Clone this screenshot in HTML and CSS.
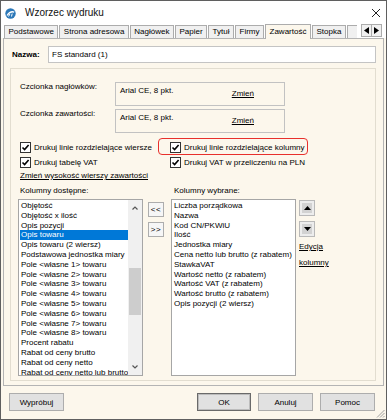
FILE: index.html
```html
<!DOCTYPE html>
<html lang="pl">
<head>
    <meta charset="UTF-8">
    <title>Wzorzec wydruku</title>
    <link rel="stylesheet" href="styles.css">
</head>
<body>
<div class="window">
    <div class="titlebar">
        <svg class="app-icon" width="11" height="11" viewBox="0 0 11 11">
            <circle cx="5.5" cy="5.5" r="5.2" fill="#2c78b8"/>
            <path d="M2 7.5 Q5.5 2.5 9.2 4.2" stroke="#fff" stroke-width="1.3" fill="none"/>
            <path d="M3.5 8.5 L5 5.8 M6.5 8.5 L7.2 5.6" stroke="#fff" stroke-width="1" fill="none"/>
        </svg>
        <span class="title">Wzorzec wydruku</span>
        <svg class="close" width="10" height="10" viewBox="0 0 10 10">
            <path d="M1 1 L9 9 M9 1 L1 9" stroke="#222" stroke-width="1"/>
        </svg>
    </div>

    <div class="tabbar">
        <div class="tabs">
            <div class="tab">Podstawowe</div>
            <div class="tab">Strona adresowa</div>
            <div class="tab">Nagłówek</div>
            <div class="tab">Papier</div>
            <div class="tab">Tytuł</div>
            <div class="tab">Firmy</div>
            <div class="tab active">Zawartość</div>
            <div class="tab">Stopka</div>
            <div class="tab stub"></div>
        </div>
        <div class="tab-arrows">
            <span class="tab-arrow">
                <svg width="5" height="7" viewBox="0 0 5 7"><path d="M5 0 L0 3.5 L5 7 Z" fill="#000"/></svg>
            </span>
            <span class="tab-arrow">
                <svg width="5" height="7" viewBox="0 0 5 7"><path d="M0 0 L5 3.5 L0 7 Z" fill="#000"/></svg>
            </span>
        </div>
    </div>

    <div class="page">
        <div class="name-row">
            <label class="name-label">Nazwa:</label>
            <input class="name-input" type="text" value="FS standard (1)">
        </div>

        <div class="group">
            <div class="font-row">
                <span class="font-label">Czcionka nagłówków:</span>
                <div class="font-box">
                    <span class="font-value">Arial CE, 8 pkt.</span>
                    <a class="link change">Zmień</a>
                </div>
            </div>
            <div class="font-row">
                <span class="font-label">Czcionka zawartości:</span>
                <div class="font-box">
                    <span class="font-value">Arial CE, 8 pkt.</span>
                    <a class="link change">Zmień</a>
                </div>
            </div>

            <div class="checks">
                <div class="check-item"><span class="box"><svg width="9" height="9" viewBox="0 0 9 9"><path d="M1.5 4.5 L3.6 6.6 L7.6 2" stroke="#000" stroke-width="1.6" fill="none"/></svg></span>Drukuj linie rozdzielające wiersze</div>
                <div class="check-item marked"><span class="box"><svg width="9" height="9" viewBox="0 0 9 9"><path d="M1.5 4.5 L3.6 6.6 L7.6 2" stroke="#000" stroke-width="1.6" fill="none"/></svg></span>Drukuj linie rozdzielające kolumny</div>
                <div class="check-item"><span class="box"><svg width="9" height="9" viewBox="0 0 9 9"><path d="M1.5 4.5 L3.6 6.6 L7.6 2" stroke="#000" stroke-width="1.6" fill="none"/></svg></span>Drukuj tabelę VAT</div>
                <div class="check-item"><span class="box"><svg width="9" height="9" viewBox="0 0 9 9"><path d="M1.5 4.5 L3.6 6.6 L7.6 2" stroke="#000" stroke-width="1.6" fill="none"/></svg></span>Drukuj VAT w przeliczeniu na PLN</div>
            </div>

            <div class="row-link"><a class="link">Zmień wysokość wierszy zawartości</a></div>

            <div class="col-labels">
                <span>Kolumny dostępne:</span>
                <span>Kolumny wybrane:</span>
            </div>

            <div class="lists">
                <div class="listbox available">
                    <ul>
                        <li>Objętość</li>
                        <li>Objętość x ilość</li>
                        <li>Opis pozycji</li>
                        <li class="selected">Opis towaru</li>
                        <li>Opis towaru (2 wiersz)</li>
                        <li>Podstawowa jednostka miary</li>
                        <li>Pole &lt;własne 1&gt; towaru</li>
                        <li>Pole &lt;własne 2&gt; towaru</li>
                        <li>Pole &lt;własne 3&gt; towaru</li>
                        <li>Pole &lt;własne 4&gt; towaru</li>
                        <li>Pole &lt;własne 5&gt; towaru</li>
                        <li>Pole &lt;własne 6&gt; towaru</li>
                        <li>Pole &lt;własne 7&gt; towaru</li>
                        <li>Pole &lt;własne 8&gt; towaru</li>
                        <li>Procent rabatu</li>
                        <li>Rabat od ceny brutto</li>
                        <li>Rabat od ceny netto</li>
                        <li>Rabat od ceny netto lub brutto</li>
                    </ul>
                    <div class="scrollbar">
                        <svg class="chev" width="14" height="16" viewBox="0 0 14 16"><path d="M4.5 9.5 L7 7 L9.5 9.5" stroke="#555" stroke-width="1.2" fill="none"/></svg>
                        <div class="track"><div class="thumb"></div></div>
                        <svg class="chev" width="14" height="16" viewBox="0 0 14 16"><path d="M4.5 6.5 L7 9 L9.5 6.5" stroke="#555" stroke-width="1.2" fill="none"/></svg>
                    </div>
                </div>

                <div class="move-btns">
                    <button class="small-btn">&lt;&lt;</button>
                    <button class="small-btn">&gt;&gt;</button>
                </div>

                <div class="listbox chosen">
                    <ul>
                        <li>Liczba porządkowa</li>
                        <li>Nazwa</li>
                        <li>Kod CN/PKWiU</li>
                        <li>Ilość</li>
                        <li>Jednostka miary</li>
                        <li>Cena netto lub brutto (z rabatem)</li>
                        <li>StawkaVAT</li>
                        <li>Wartość netto (z rabatem)</li>
                        <li>Wartość VAT (z rabatem)</li>
                        <li>Wartość brutto (z rabatem)</li>
                        <li>Opis pozycji (2 wiersz)</li>
                    </ul>
                </div>

                <div class="order">
                    <button class="arrow-btn"><svg width="7" height="4" viewBox="0 0 7 4"><path d="M0 4 L3.5 0 L7 4 Z" fill="#000"/></svg></button>
                    <button class="arrow-btn"><svg width="7" height="4" viewBox="0 0 7 4"><path d="M0 0 L3.5 4 L7 0 Z" fill="#000"/></svg></button>
                    <a class="link order-link">Edycja</a>
                    <a class="link order-link">kolumny</a>
                </div>
            </div>
        </div>
    </div>

    <div class="footer">
        <button class="btn">Wypróbuj</button>
        <button class="btn default push">OK</button>
        <button class="btn">Anuluj</button>
        <button class="btn">Pomoc</button>
    </div>

    <svg class="grip" width="10" height="10" viewBox="0 0 10 10">
        <path d="M9.5 2 L2 9.5 M9.5 5 L5 9.5 M9.5 8 L8 9.5" stroke="#a0a0a0" stroke-width="1"/>
    </svg>
</div>
</body>
</html>
```

FILE: styles.css
```css
body {
    margin: 0;
    font-family: "Liberation Sans", Arial, sans-serif;
    font-size: 8px;
    color: #000;
    background: #fff;
}
.window {
    position: relative;
    width: 387px;
    height: 420px;
    box-sizing: border-box;
    border: 1px solid #5f5f5f;
    background: #fcf7ec;
    display: flex;
    flex-direction: column;
}
.titlebar {
    height: 23px;
    flex: none;
    display: flex;
    align-items: center;
    padding-left: 4px;
    background: #fff;
}
.app-icon {
    margin-top: 1px;
}
.title {
    margin-left: 9px;
    font-size: 10px;
    color: #111;
}
.close {
    margin-left: auto;
    margin-right: 5px;
}

/* zakładki */
.tabbar {
    height: 14px;
    flex: none;
    display: flex;
    align-items: flex-end;
    padding-left: 3px;
    background: #fff;
    position: relative;
    z-index: 1;
}
.tabs {
    display: flex;
    align-items: flex-end;
    width: 353px;
    overflow: hidden;
    height: 15px;
    margin-bottom: -1px;
}
.tab {
    flex: none;
    height: 13px;
    line-height: 12px;
    padding: 0 3.5px;
    margin-right: 1px;
    margin-bottom: 1px;
    box-sizing: border-box;
    border: 1px solid #acacac;
    border-bottom: none;
    background: #f0f0f0;
    white-space: nowrap;
}
.tab.active {
    height: 15px;
    line-height: 13px;
    margin-bottom: 0;
    background: #fcf7ec;
}
.tab.stub {
    width: 30px;
}
.tab-arrows {
    display: flex;
    margin-left: 4px;
    margin-bottom: 1px;
    border: 1px solid #acacac;
    background: #f0f0f0;
}
.tab-arrow {
    width: 9px;
    height: 11px;
    display: flex;
    align-items: center;
    justify-content: center;
}
.tab-arrow + .tab-arrow {
    border-left: 1px solid #acacac;
}

/* strona */
.page {
    height: 348px;
    flex: none;
    box-sizing: border-box;
    margin: 0 2px;
    border: 1px solid #b4b4b4;
    padding: 7px 0 4px 6px;
}
.name-row {
    display: flex;
    align-items: center;
    padding-left: 2px;
}
.name-label {
    width: 36px;
    font-weight: bold;
}
.name-input {
    width: 328px;
    height: 17px;
    box-sizing: border-box;
    border: 1px solid #c4c4c4;
    background: #fff;
    font: inherit;
    padding: 0 3px;
    margin: 0;
    outline: none;
}
.group {
    width: 366px;
    box-sizing: border-box;
    margin-top: 5px;
    border: 1px solid #e2ddd0;
    padding: 13px 0 4px 7px;
}
.font-row {
    display: flex;
    line-height: 10px;
}
.font-row + .font-row {
    margin-top: 3px;
}
.font-label {
    width: 95px;
    margin-left: 2px;
}
.font-box {
    width: 170px;
    height: 24px;
    box-sizing: border-box;
    border: 1px solid #c2c2c2;
    display: flex;
    padding: 3px 0 0 4px;
}
.change {
    margin-left: auto;
    margin-right: 30px;
    align-self: center;
    margin-top: -3px;
}
.link {
    color: #000;
    text-decoration: underline;
}
.checks {
    display: grid;
    grid-template-columns: 150px auto;
    margin-top: 7px;
    margin-left: 2px;
}
.check-item {
    height: 15px;
    display: flex;
    align-items: center;
    white-space: nowrap;
    position: relative;
}
.box {
    width: 9px;
    height: 9px;
    border: 1px solid #333;
    background: #fff;
    margin-right: 3px;
    display: flex;
}
.marked::after {
    content: "";
    position: absolute;
    left: -12px;
    top: -2px;
    width: 150px;
    height: 17px;
    box-sizing: border-box;
    border: 1.5px solid #e8302c;
    border-radius: 4px;
}
.row-link {
    height: 12px;
    line-height: 12px;
    margin-left: 2px;
}
.col-labels {
    display: grid;
    grid-template-columns: 154px auto;
    height: 14px;
    line-height: 14px;
    margin-top: 2px;
    margin-left: 2px;
}

/* listy kolumn */
.lists {
    display: flex;
    align-items: flex-start;
    margin-top: 1px;
}
.listbox {
    width: 125px;
    height: 177px;
    box-sizing: border-box;
    border: 1px solid #a6a6a6;
    background: #fff;
    overflow: hidden;
    display: flex;
}
.listbox ul {
    list-style: none;
    margin: 0;
    padding: 1px 0 0 0;
    flex: 1;
    min-width: 0;
}
.listbox li {
    height: 9.8px;
    line-height: 9.8px;
    padding-left: 2px;
    white-space: nowrap;
    overflow: hidden;
}
.listbox li.selected {
    background: #0078d7;
    color: #fff;
    margin-left: 1px;
    padding-left: 1px;
}
.scrollbar {
    width: 14px;
    background: #f0f0f0;
    display: flex;
    flex-direction: column;
}
.track {
    flex: 1;
    padding-top: 52px;
}
.thumb {
    height: 47px;
    margin: 0 1px;
    background: #cdcdcd;
}
.move-btns {
    display: flex;
    flex-direction: column;
    gap: 5px;
    margin: 3px 7px 0 5px;
}
.small-btn {
    width: 16px;
    height: 15px;
    padding: 0;
    border: 1px solid #adadad;
    background: #f6f6f6;
    font: inherit;
    letter-spacing: 0.5px;
}
.order {
    display: flex;
    flex-direction: column;
    align-items: flex-start;
    margin-left: 3px;
    margin-top: 1px;
}
.arrow-btn {
    width: 16px;
    height: 16px;
    padding: 0;
    border: 1px solid #b9b9b9;
    background: #d2d2d2;
    box-shadow: inset 0 0 0 2px #ededed;
    display: flex;
    align-items: center;
    justify-content: center;
}
.arrow-btn + .arrow-btn {
    margin-top: 5px;
}
.order-link {
    line-height: 12px;
    margin-top: 4px;
}

/* przyciski */
.footer {
    flex: 1;
    display: flex;
    align-items: flex-start;
    padding: 7px 11px 0 8px;
}
.btn {
    width: 55px;
    height: 18px;
    padding: 0;
    border: 1px solid #adadad;
    background: #e1e1e1;
    font: inherit;
    color: #000;
}
.btn + .btn {
    margin-left: 7px;
}
.btn.push {
    margin-left: auto;
}
.btn.default {
    width: 54px;
    border-color: #6a6a6a;
    box-shadow: inset 0 0 0 1px #bcbcbc;
}
.grip {
    position: absolute;
    right: 1px;
    bottom: 1px;
}
```
